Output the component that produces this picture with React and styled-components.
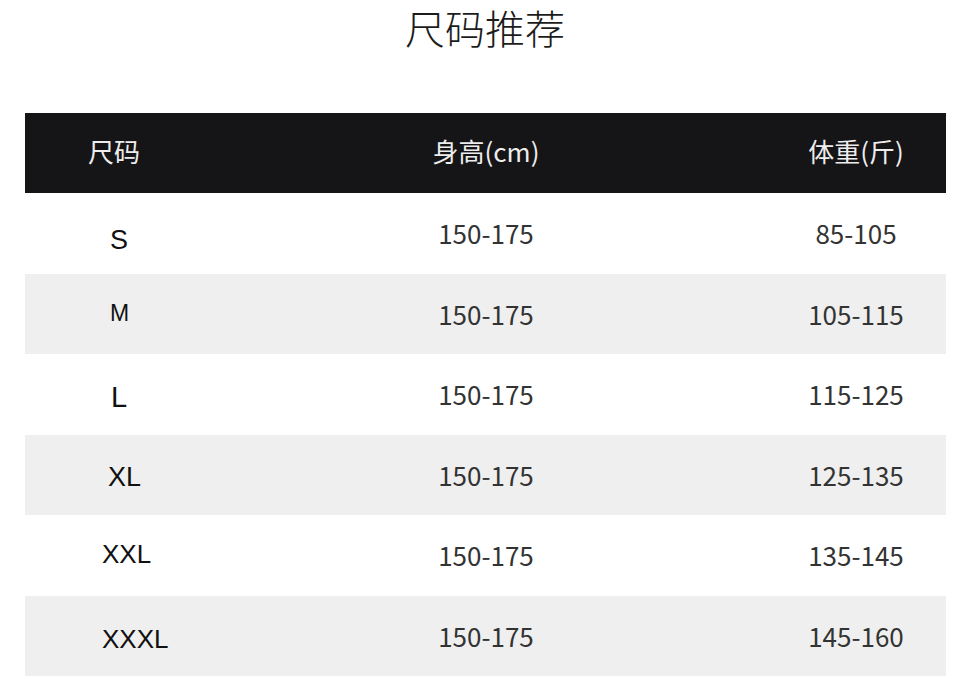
import React from 'react';
import styled, { createGlobalStyle } from 'styled-components';

const GlobalStyle = createGlobalStyle`
    body {
        margin: 0;
        background: #ffffff;
        font-family: "Noto Sans CJK SC", "Noto Sans", sans-serif;
    }
`;

const Page = styled.div`
    width: 967px;
    height: 679px;
    padding-top: 1px;
    box-sizing: border-box;
    overflow: hidden;
`;

const Title = styled.h1`
    margin: 0 0 60px;
    text-align: center;
    font-size: 40px;
    line-height: 52px;
    font-weight: 300;
    color: #1c1c1c;
    padding-left: 3px;
`;

const Table = styled.div`
    margin-left: 25px;
    width: 921px;
`;

const Row = styled.div`
    display: grid;
    grid-template-columns: 181px 560px 180px;
    height: ${p => p.head ? '80px' : '80.5px'};
    background: ${p => p.head ? '#151417' : p.shaded ? '#efefef' : '#ffffff'};
    color: ${p => p.head ? '#ededed' : '#333333'};
`;

const Cell = styled.div`
    display: flex;
    align-items: center;
    justify-content: center;
    font-size: 26px;
    line-height: 1;
`;

const HeadCell = styled(Cell)`
    justify-content: ${p => p.left ? 'flex-start' : 'center'};
    padding-left: ${p => p.left ? '63px' : '0'};
    margin-top: -4px;
`;

const SizeCell = styled.div`
    display: flex;
    align-items: center;
    padding-left: ${p => p.indent}px;
    padding-top: ${p => p.drop > 0 ? p.drop * 2 : 0}px;
    padding-bottom: ${p => p.drop < 0 ? -p.drop * 2 : 0}px;
    font-family: "Liberation Sans", Arial, sans-serif;
    font-size: ${p => p.fs}px;
    color: #111111;
`;

const rows = [
    { size: 'S', weight: '85-105', indent: 85, drop: 7, fs: 27 },
    { size: 'M', weight: '105-115', indent: 85, drop: 0, fs: 23 },
    { size: 'L', weight: '115-125', indent: 86, drop: 3, fs: 29 },
    { size: 'XL', weight: '125-135', indent: 83, drop: 3, fs: 27 },
    { size: 'XXL', weight: '135-145', indent: 77, drop: -1, fs: 26 },
    { size: 'XXXL', weight: '145-160', indent: 77, drop: 4, fs: 26 },
];

export default function App() {
    return (
        <Page>
            <GlobalStyle />
            <Title>尺码推荐</Title>
            <Table>
                {/* header bar */}
                <Row head>
                    <HeadCell left>尺码</HeadCell>
                    <HeadCell>身高(cm)</HeadCell>
                    <HeadCell>体重(斤)</HeadCell>
                </Row>
                {rows.map((r, i) => (
                    <Row key={r.size} shaded={i % 2 === 1}>
                        <SizeCell indent={r.indent} drop={r.drop} fs={r.fs}>{r.size}</SizeCell>
                        <Cell>150-175</Cell>
                        <Cell>{r.weight}</Cell>
                    </Row>
                ))}
            </Table>
        </Page>
    );
}
